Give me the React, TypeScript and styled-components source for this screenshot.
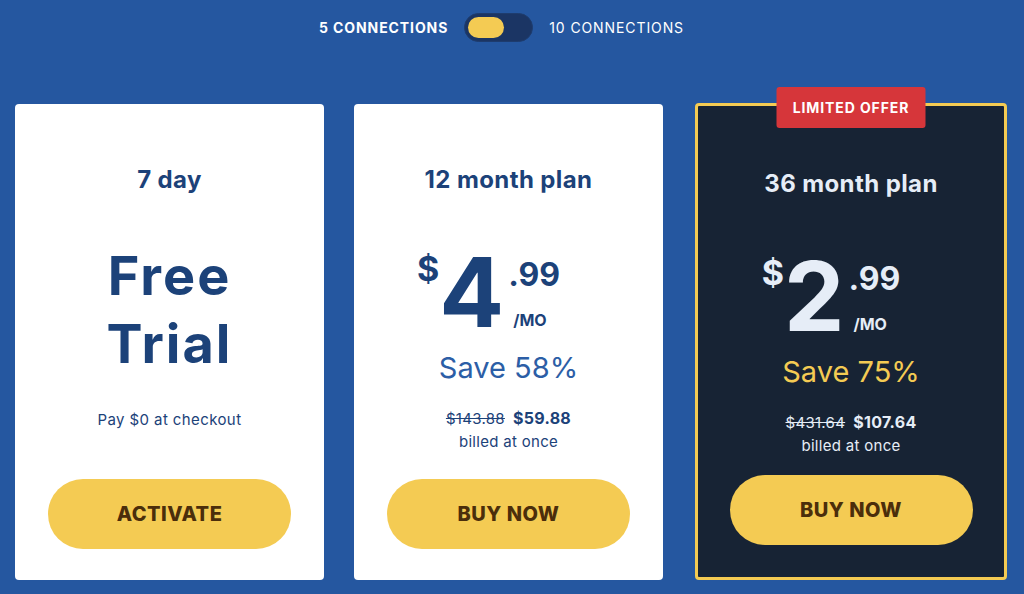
import React from "react";
import styled, { createGlobalStyle } from "styled-components";

const Global = createGlobalStyle`
  html, body { margin: 0; padding: 0; }
  body {
    background: #2557a0;
    font-family: "Inter", "Open Sans", sans-serif;
    width: 1024px;
    height: 594px;
    overflow: hidden;
  }
`;

const Page = styled.div`
  display: flex;
  flex-direction: column;
  align-items: stretch;
  padding-top: 13px;
`;

const ToggleRow = styled.div`
  display: flex;
  justify-content: center;
  align-items: center;
  gap: 16px;
  height: 29px;
  padding-right: 21px;
`;

const ToggleLabel = styled.span<{ $active?: boolean }>`
  color: #fff;
  font-size: 14px;
  font-weight: ${(p) => (p.$active ? 700 : 400)};
  letter-spacing: 0.9px;
`;

const Switch = styled.div`
  width: 69px;
  height: 29px;
  box-sizing: border-box;
  border-radius: 15px;
  background: #1b3564;
  border: 1px solid #1e3c6e;
  padding: 3px 0 0 3px;
`;

const Knob = styled.div`
  width: 36px;
  height: 21px;
  border-radius: 11px;
  background: #f4cb53;
`;

const Cards = styled.div`
  display: grid;
  grid-template-columns: 309px 309px 314px;
  column-gap: 30px;
  margin-top: 61px;
  padding-left: 15px;
  align-items: end;
`;

const Card = styled.div<{ $dark?: boolean }>`
  position: relative;
  display: flex;
  flex-direction: column;
  align-items: center;
  box-sizing: border-box;
  width: ${(p) => (p.$dark ? 312 : 309)}px;
  height: ${(p) => (p.$dark ? 477 : 476)}px;
  margin-left: ${(p) => (p.$dark ? 2 : 0)}px;
  background: ${(p) => (p.$dark ? "#172334" : "#fff")};
  border: ${(p) => (p.$dark ? "3px solid #f4cb53" : "none")};
  border-radius: 4px;
  padding: ${(p) => (p.$dark ? "64px 0 32px" : "62px 0 31px")};
  color: ${(p) => (p.$dark ? "#e6edf7" : "#1c4279")};
`;

const Badge = styled.div`
  position: absolute;
  top: -19px;
  left: 50%;
  transform: translateX(-50%);
  width: 149px;
  height: 41px;
  display: flex;
  align-items: center;
  justify-content: center;
  background: #d6363a;
  border-radius: 3px;
  color: #fff;
  font-size: 14px;
  font-weight: 700;
  letter-spacing: 0.9px;
`;

const Title = styled.div`
  font-size: 24px;
  font-weight: 700;
  line-height: 28px;
  letter-spacing: 0.4px;
`;

const FreeTrial = styled.div`
  margin-top: 48px;
  font-size: 54px;
  font-weight: 700;
  line-height: 68px;
  text-align: center;
  letter-spacing: 2px;
`;

const Note = styled.div`
  margin-top: 31px;
  font-size: 15px;
  line-height: 22px;
  letter-spacing: 0.4px;
`;

const PriceRow = styled.div`
  display: flex;
  align-items: flex-start;
  margin-top: 50px;
  height: 96px;
  margin-left: -40px;
`;

const Currency = styled.span`
  font-size: 34px;
  font-weight: 700;
  line-height: 40px;
  margin-top: 5px;
`;

const Whole = styled.span`
  font-size: 96px;
  font-weight: 700;
  line-height: 96px;
`;

const Fraction = styled.div`
  display: flex;
  flex-direction: column;
  margin-left: 4px;
`;

const Cents = styled.span`
  font-size: 32px;
  font-weight: 700;
  line-height: 40px;
  margin-top: 11px;
`;

const PerMonth = styled.span`
  font-size: 16px;
  font-weight: 700;
  line-height: 18px;
  margin-top: 16px;
  margin-left: 5px;
`;

const Save = styled.div<{ $dark?: boolean }>`
  margin-top: 11px;
  font-size: 29px;
  line-height: 34px;
  color: ${(p) => (p.$dark ? "#f4cb53" : "#2c5ea6")};
`;

const Billed = styled.div`
  margin-top: 22px;
  font-size: 15px;
  line-height: 23px;
  text-align: center;
  letter-spacing: 0.3px;
`;

const Old = styled.span`
  text-decoration: line-through;
  margin-right: 8px;
`;

const New = styled.span`
  font-weight: 700;
  font-size: 16px;
`;

const Button = styled.button`
  margin-top: auto;
  width: 243px;
  height: 70px;
  border: none;
  border-radius: 35px;
  background: #f4cb53;
  color: #4b2e0b;
  font-family: inherit;
  font-size: 20px;
  font-weight: 800;
  letter-spacing: 0.5px;
  cursor: pointer;
`;

type Plan = {
  title: string;
  whole: string;
  cents: string;
  save: string;
  old: string;
  now: string;
  dark?: boolean;
};

const plans: Plan[] = [
  { title: "12 month plan", whole: "4", cents: ".99", save: "Save 58%", old: "$143.88", now: "$59.88" },
  { title: "36 month plan", whole: "2", cents: ".99", save: "Save 75%", old: "$431.64", now: "$107.64", dark: true },
];

export default function App() {
  return (
    <Page>
      <Global />
      <ToggleRow>
        <ToggleLabel $active>5 CONNECTIONS</ToggleLabel>
        <Switch>
          <Knob />
        </Switch>
        <ToggleLabel>10 CONNECTIONS</ToggleLabel>
      </ToggleRow>
      <Cards>
        <Card>
          <Title>7 day</Title>
          <FreeTrial>
            Free
            <br />
            Trial
          </FreeTrial>
          <Note>Pay $0 at checkout</Note>
          <Button>ACTIVATE</Button>
        </Card>
        {plans.map((p) => (
          <Card key={p.title} $dark={p.dark}>
            {p.dark && <Badge>LIMITED OFFER</Badge>}
            <Title>{p.title}</Title>
            <PriceRow>
              <Currency>$</Currency>
              <Whole>{p.whole}</Whole>
              <Fraction>
                <Cents>{p.cents}</Cents>
                <PerMonth>/MO</PerMonth>
              </Fraction>
            </PriceRow>
            <Save $dark={p.dark}>{p.save}</Save>
            <Billed>
              <Old>{p.old}</Old>
              <New>{p.now}</New>
              <br />
              billed at once
            </Billed>
            <Button>BUY NOW</Button>
          </Card>
        ))}
      </Cards>
    </Page>
  );
}
